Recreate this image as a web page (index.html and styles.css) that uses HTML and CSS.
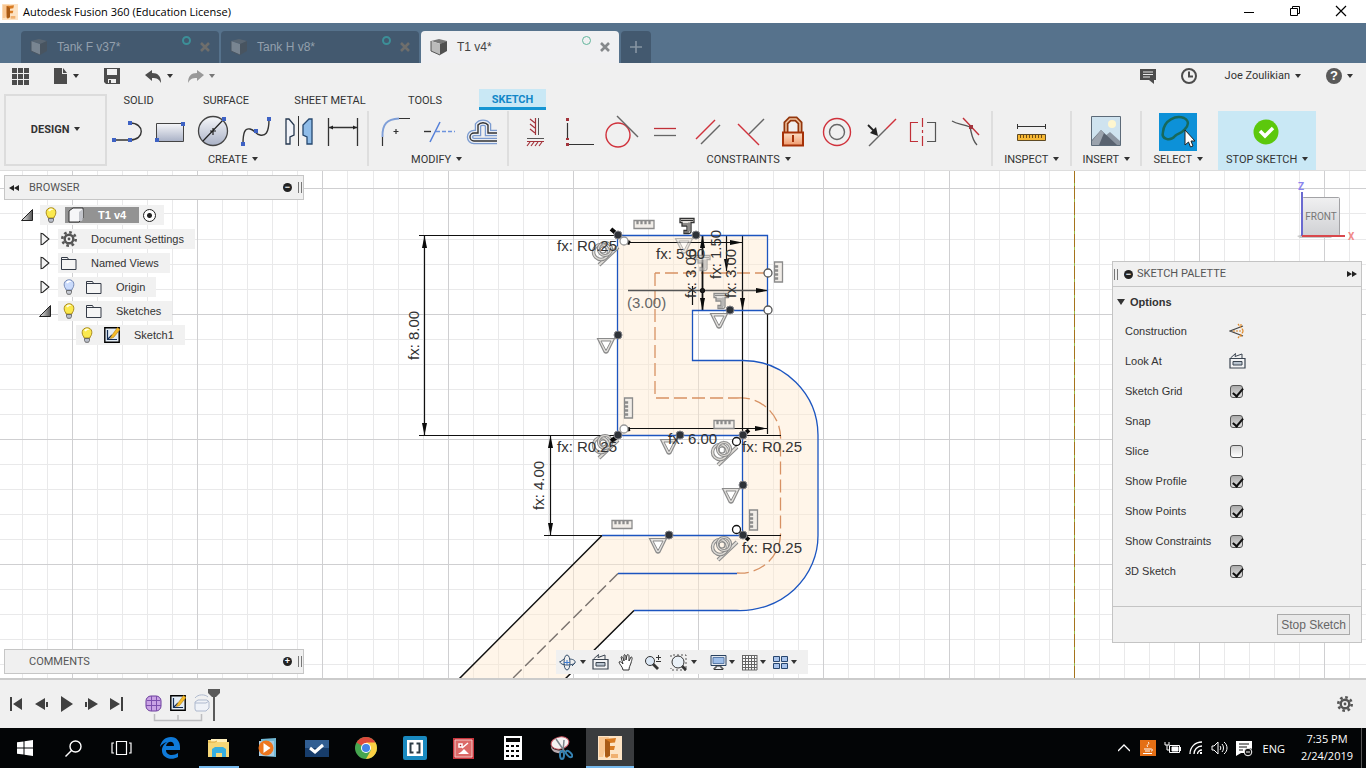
FILE: index.html
```html
<!DOCTYPE html>
<html lang="en">
<head>
<meta charset="utf-8">
<title>Autodesk Fusion 360 (Education License)</title>
<link rel="stylesheet" href="styles.css">
</head>
<body>
<svg class="defs" aria-hidden="true">
  <defs>
    <linearGradient id="steel" x1="0" y1="0" x2="0" y2="1"><stop offset="0" stop-color="#f6f7fa"/><stop offset="1" stop-color="#a9b1c6"/></linearGradient>
    <linearGradient id="cubeface" x1="0" y1="0" x2="0" y2="1"><stop offset="0" stop-color="#f0f0f1"/><stop offset="1" stop-color="#d0d1d4"/></linearGradient>
    <linearGradient id="fade" x1="0" y1="0" x2="1" y2="0"><stop offset="0" stop-color="#eee"/><stop offset="1" stop-color="#555"/></linearGradient>
    <linearGradient id="lockfill" x1="0" y1="0" x2="0" y2="1"><stop offset="0" stop-color="#fbe0c8"/><stop offset="1" stop-color="#f0996c"/></linearGradient>
    <symbol id="bulb" viewBox="0 0 16 16"><path d="M5 10C2 7 2.500 1 8 .8S14 7 11 10v1H5z" fill="#fbe94e" stroke="#a98a1c"/><path d="M6 4c1-2 3-1.500 3-1" stroke="#fffde0" stroke-width="2" fill="none"/><path d="M5.500 11.500h5v2l-1 1.800h-3l-1-1.800z" fill="#b9bec9" stroke="#555" stroke-width=".8"/></symbol>
    <symbol id="bulb-off" viewBox="0 0 16 16"><path d="M5 10C2 7 2.500 1 8 .8S14 7 11 10v1H5z" fill="#c9dafb" stroke="#7589b5"/><path d="M6 4c1-2 3-1.500 3-1" stroke="#fff" stroke-width="2" fill="none"/><path d="M5.500 11.500h5v2l-1 1.800h-3l-1-1.800z" fill="#c6cad3" stroke="#555" stroke-width=".8"/></symbol>
    <symbol id="folder" viewBox="0 0 16 16"><path d="M.5 14.500v-12h6l1 2h7.500v10zM1 4.500h7" fill="#f5f5f5" stroke="#343b47"/></symbol>
    <symbol id="gear" viewBox="0 0 16 16"><circle cx="8" cy="8" r="6.700" fill="none" stroke="#555" stroke-width="2.600" stroke-dasharray="2.630 2.630"/><circle cx="8" cy="8" r="4.300" fill="none" stroke="#555" stroke-width="2.400"/><circle cx="8" cy="8" r="1.400" fill="#555"/></symbol>
    <symbol id="sketch" viewBox="0 0 16 16"><path d="M.8.8h14.400v14.400H.8z" fill="#e4edf5" stroke="#000" stroke-width="1.400"/><path d="M3.500 3v9.500H13M4 12l4-4" fill="none" stroke="#122c55" stroke-width="1.200"/><path d="M7 9.500L13.500.5 16 2.500 9.500 10.500 6.500 11.500z" fill="#f6bd29" stroke="#b47a10" stroke-width=".6"/></symbol>
    <symbol id="closed" viewBox="0 0 12 16"><path d="M1.500 1.500v13l2-.5 7-6-7-6z" fill="#f4f4f4" stroke="#222" stroke-width="1.200"/></symbol>
    <symbol id="open" viewBox="0 0 12 12"><path d="M.5 11.500h11V.5z" fill="url(#fade)" stroke="#222"/></symbol>
    <symbol id="lookat" viewBox="0 0 17 16"><path d="M1 5.500h15V15H1z" fill="#f2f3f5" stroke="#3a4450" stroke-width="1.200"/><path d="M4 8.500h9v3.500H4z" fill="#b8c3cf" stroke="#3a4450"/><path d="M1.500 5l5-4.500-.5 3 7-2.500V5" fill="none" stroke="#3a4450"/></symbol>
    <symbol id="cube" viewBox="0 0 18 18"><path d="M1 3l8-2 8 2-6 3z" fill="#777"/><path d="M1 3l9 3v11l-9-4z" fill="#bbb"/><path d="M10 6l7-3v10l-7 4z" fill="#505050"/><path d="M1 3v10l9 4" fill="none" stroke="#555"/></symbol>
    <symbol id="comb" viewBox="0 0 22 11"><path d="M1 9.500v-8h3v3h1v-3h3v3h1v-3h3v3h1v-3h3v3h1v-3h4v8z" fill="#f1ede8" stroke="#8b8b8b" stroke-width="1.300"/></symbol>
    <symbol id="tri" viewBox="0 0 20 18"><path d="M1.500 1.500h17L12 15q-2 2-4 0z" fill="#e3e1de" stroke="#8b8b8b" stroke-width="1.200"/><path d="M5 4h10l-5 9.500z" fill="#fff" stroke="#8b8b8b"/></symbol>
    <symbol id="tee" viewBox="0 0 18 18"><path d="M2 1.500h14v4h-3V15q-1 2-3 1.500H6v-3h3V9H4V5.500H2z" fill="#e6e3df" stroke="currentColor" stroke-width="1.300"/><path d="M3 3.500h12M11 5.500v9M4 7h6M7 15h4" stroke="currentColor" fill="none"/></symbol>
    <symbol id="tan" viewBox="0 0 32 30"><path d="M9 27L28 9" stroke="#8b8b8b" stroke-width="4"/><path d="M9 27L28 9" stroke="#e0ddd8" stroke-width="1.800"/><g fill="none"><circle cx="11" cy="14" r="7.500" stroke="#8b8b8b" stroke-width="3.500"/><circle cx="11" cy="14" r="7.500" stroke="#dedbd6" stroke-width="1.500"/><circle cx="15" cy="11" r="6.500" stroke="#8b8b8b" stroke-width="3.200"/><circle cx="15" cy="11" r="6.500" stroke="#dedbd6" stroke-width="1.200"/><circle cx="13" cy="12" r="3" stroke="#8b8b8b" stroke-width="1.200"/></g></symbol>
    <symbol id="fusion" viewBox="0 0 24 24"><path d="M0 0h24v24H0z" fill="#fde3c4"/><path d="M1 1h10l-6 20H1z" fill="#f9c793"/><path d="M7 3l11-1-1 4.500-5 .5v3h5l-1 4h-4v5l-3 3-2-1z" fill="#d97b22"/><path d="M7 3l5 3v14l-3 1-2-1z" fill="#a85a16"/><path d="M13 18h7v4h-7z" fill="#f0b070"/></symbol>
    <marker id="arr" markerUnits="userSpaceOnUse" markerWidth="13" markerHeight="7" refX="12" refY="3.500" orient="auto-start-reverse"><path d="M0 1l12.500 2.500L0 6z" fill="#0b0b0b"/></marker>
  </defs>
</svg>

<div class="app">
  <header class="titlebar">
    <svg class="app-logo" width="16" height="16"><use href="#fusion"/></svg>
    <h1>Autodesk Fusion 360 (Education License)</h1>
    <div class="window-buttons">
      <button aria-label="Minimize"><svg width="12" height="12"><path d="M1 7.500h10" stroke="#000"/></svg></button>
      <button aria-label="Restore"><svg width="12" height="12" fill="none" stroke="#000"><path d="M1.500 3.500h7v7h-7zM3.500 3V1.500h7v7H9"/></svg></button>
      <button aria-label="Close"><svg width="12" height="12"><path d="M1 1l10 10M11 1L1 11" stroke="#000" stroke-width="1.200"/></svg></button>
    </div>
  </header>

  <nav class="doc-tabs" aria-label="Documents">
    <div class="doc-tab"><svg class="dim" width="18" height="18"><use href="#cube"/></svg><a href="#tank-f">Tank F v37*</a><i class="sync"></i><button aria-label="Close Tank F"><svg width="10" height="10"><path d="M1 1l8 8M9 1L1 9" stroke="#6e6e6c" stroke-width="2.600"/></svg></button></div>
    <div class="doc-tab"><svg class="dim" width="18" height="18"><use href="#cube"/></svg><a href="#tank-h">Tank H v8*</a><i class="sync"></i><button aria-label="Close Tank H"><svg width="10" height="10"><path d="M1 1l8 8M9 1L1 9" stroke="#6e6e6c" stroke-width="2.600"/></svg></button></div>
    <div class="doc-tab active"><svg width="18" height="18"><use href="#cube"/></svg><a href="#t1">T1 v4*</a><i class="sync"></i><button aria-label="Close T1"><svg width="10" height="10"><path d="M1 1l8 8M9 1L1 9" stroke="#85888b" stroke-width="2.600"/></svg></button></div>
    <button class="new-tab" aria-label="New tab"><svg width="12" height="12"><path d="M6 0v12M0 6h12" stroke="#8795a3" stroke-width="1.600"/></svg></button>
  </nav>

  <div class="quickbar">
    <button class="q-apps" aria-label="Data panel"><svg width="17" height="17" fill="#4c4c4c"><path d="M0 0h5v5H0zM6 0h5v5H6zM12 0h5v5h-5zM0 6h5v5H0zM6 6h5v5H6zM12 6h5v5h-5zM0 12h5v5H0zM6 12h5v5H6zM12 12h5v5h-5z"/></svg></button>
    <button class="q-file" aria-label="File"><svg width="14" height="16"><path d="M0 0h8v6h5v10H0zM9 0l4 5H9z" fill="#4c4c4c"/></svg><i class="caret"></i></button>
    <button class="q-save" aria-label="Save"><svg width="16" height="16"><path d="M0 0h16v16H2l-2-2z" fill="#4c4c4c"/><path d="M3 1h10v6H3zM4 11h8v4H4z" fill="#f0f0f0"/><path d="M5 12h2v3H5z" fill="#4c4c4c"/></svg></button>
    <button class="q-undo" aria-label="Undo"><svg width="17" height="13"><path d="M0 5l7-5v3c6 0 9 3 9 10-2-4-4-5-9-5v3z" fill="#4c4c4c"/></svg><i class="caret"></i></button>
    <button class="q-redo" aria-label="Redo"><svg width="17" height="13"><path d="M17 5l-7-5v3C4 3 1 6 1 13c2-4 4-5 9-5v3z" fill="#999"/></svg><i class="caret"></i></button>
    <div class="account">
      <button aria-label="Comments"><svg width="16" height="15"><path d="M0 0h16v11h-2v4l-5-4H0z" fill="#4c4c4c"/><path d="M3 3h10M3 5.500h10M3 8h7" stroke="#e8e8e8"/></svg></button>
      <button aria-label="Job status"><svg width="16" height="16" fill="none" stroke="#4c4c4c" stroke-width="2"><circle cx="8" cy="8" r="7"/><path d="M8 3.500v5h4"/></svg></button>
      <button class="user">Joe Zoulikian <i class="caret"></i></button>
      <button class="help" aria-label="Help"><span>?</span><i class="caret"></i></button>
    </div>
  </div>

  <div class="ribbon">
    <button class="workspace">DESIGN <i class="caret"></i></button>
    <div class="ribbon-main">
      <nav class="ribbon-tabs" aria-label="Toolbar tabs">
        <a class="t-solid" href="#solid">SOLID</a><a class="t-surface" href="#surface">SURFACE</a><a class="t-sheet" href="#sheet">SHEET METAL</a><a class="t-tools" href="#tools">TOOLS</a><a class="current" href="#sketch-tab">SKETCH</a>
      </nav>
      <div class="groups">
        <section class="group">
          <div class="tools">
            <button aria-label="Line"><svg viewBox="0 0 43 38"><path d="M23 10c15 0 15 17 0 17H7" fill="none" stroke="#333" stroke-width="1.400"/><path d="M21 8h4v4h-4zM5 25h4v4H5zM21 25h4v4h-4z" fill="#3e62c4"/></svg></button>
            <button aria-label="Rectangle"><svg viewBox="0 0 43 38"><path d="M6.500 10.500h27v18h-27z" fill="url(#steel)" stroke="#444"/><path d="M31 9h4v4h-4zM5 25h4v4H5z" fill="#3e62c4"/></svg></button>
            <button aria-label="Circle"><svg viewBox="0 0 43 38"><circle cx="20" cy="18" r="14.500" fill="url(#steel)" stroke="#444" stroke-width="1.300"/><path d="M10 28L31 6M20 15v7M17 18h6" stroke="#222" stroke-width="1.200"/><path d="M29 4h4v4h-4z" fill="#3e62c4"/></svg></button>
            <button aria-label="Spline"><svg viewBox="0 0 43 38"><path d="M7 31C7 19 9 15 14 16s5 5 10 6 9-1 9-16" fill="none" stroke="#333" stroke-width="1.400"/><path d="M5 29h4v4H5zM18 16h4v4h-4zM31 4h4v4h-4z" fill="#3e62c4"/></svg></button>
            <button aria-label="Mirror"><svg viewBox="0 0 43 38"><path d="M7 6h3l5 6v10l-4 2v7H7z" fill="#f1f3f8" stroke="#26384f" stroke-width="1.300"/><path d="M33 6h-3l-6 6v10l4 2v7h5z" fill="#8fbce8" stroke="#26486f" stroke-width="1.300"/><path d="M19.500 3v30" stroke="#333"/></svg></button>
            <button aria-label="Sketch Dimension"><svg viewBox="0 0 43 38"><path d="M6.500 5v28M35.500 5v28M7 14.500h28" stroke="#333" stroke-width="1.300"/><path d="M7 14.500l4-2v4zM35 14.500l-4-2v4z" fill="#222"/></svg></button>
          </div>
          <button class="group-label">CREATE <i class="caret"></i></button>
        </section>
        <section class="group">
          <div class="tools">
            <button aria-label="Fillet"><svg viewBox="0 0 43 38"><path d="M7.500 33v-9M22 5.500h13M18.500 18.500h5M21 16v5" stroke="#333" stroke-width="1.200"/><path d="M7.500 24C7 11 12 6 24 5.500" fill="none" stroke="#7f9fd8" stroke-width="2"/></svg></button>
            <button aria-label="Trim"><svg viewBox="0 0 43 38"><path d="M12 29L22 9" stroke="#5580d8" stroke-width="1.600"/><path d="M6 18.500h7" stroke="#333" stroke-width="1.400"/><path d="M18 18.500h19" stroke="#6d93dd" stroke-width="1.400" stroke-dasharray="4 2"/></svg></button>
            <button aria-label="Offset"><svg viewBox="0 0 43 38"><g fill="none"><path d="M36 20H27v-8a6 5 0 0 0-10 0v8h-4a4 4 0 0 0 0 8h23" stroke="#7b9bd0" stroke-width="6.500"/><path d="M36 20H27v-8a6 5 0 0 0-10 0v8h-4a4 4 0 0 0 0 8h23" stroke="#e9edf4" stroke-width="4"/><path d="M36 20H27v-8a6 5 0 0 0-10 0v8h-4a4 4 0 0 0 0 8h23" stroke="#333" stroke-width="1.400"/></g></svg></button>
          </div>
          <button class="group-label">MODIFY <i class="caret"></i></button>
        </section>
        <section class="group">
          <div class="tools constraints">
            <button aria-label="Horizontal/Vertical"><svg viewBox="0 0 43 38" fill="none"><path d="M20.500 5v17M12 28.500h17M20 10l-5-4M20 15l-5-4M20 20l-5-4M15 29l-3 4M19 29l-3 4M23 29l-3 4M27 29l-3 4" stroke="#a3343c" stroke-width="1.200"/><path d="M23.500 5v17M12 25.500h17" stroke="#555"/></svg></button>
            <button aria-label="Coincident"><svg viewBox="0 0 43 38"><path d="M9.500 10v15M9 31.500h27" stroke="#333" stroke-width="1.200"/><path d="M8 5h3v3H8zM8 25h3v2H8zM8 30h3v3H8z" fill="#a3343c"/></svg></button>
            <button aria-label="Tangent"><svg viewBox="0 0 43 38" fill="none"><circle cx="17" cy="22" r="12" stroke="#d0323c" stroke-width="1.400"/><path d="M16 3l21 21" stroke="#666" stroke-width="1.400"/></svg></button>
            <button aria-label="Equal"><svg viewBox="0 0 43 38"><path d="M10 15.500h22" stroke="#c03038" stroke-width="1.300"/><path d="M10 22.500h22" stroke="#666" stroke-width="1.300"/></svg></button>
            <button aria-label="Parallel"><svg viewBox="0 0 43 38"><path d="M9 26L28 7" stroke="#d0323c" stroke-width="1.400"/><path d="M14 31l19-19" stroke="#666" stroke-width="1.400"/></svg></button>
            <button aria-label="Perpendicular"><svg viewBox="0 0 43 38"><path d="M19 21L34 6" stroke="#666" stroke-width="1.400"/><path d="M8 11l21 21" stroke="#d0323c" stroke-width="1.400"/></svg></button>
            <button aria-label="Fix"><svg viewBox="0 0 43 38"><path d="M13 19v-9l4-4h6l4 4v9" fill="none" stroke="#93360c" stroke-width="5"/><path d="M13 19v-9l4-4h6l4 4v9" fill="none" stroke="#f1c5a2" stroke-width="1.500"/><path d="M10 19.500h20v13H10z" fill="url(#lockfill)" stroke="#a63208" stroke-width="2"/><path d="M20 22v7" stroke="#a63208" stroke-width="2"/></svg></button>
            <button aria-label="Concentric"><svg viewBox="0 0 43 38" fill="none"><circle cx="21" cy="19" r="13.500" stroke="#d0323c" stroke-width="1.400"/><circle cx="21" cy="19" r="7.500" stroke="#666" stroke-width="1.400"/></svg></button>
            <button aria-label="Midpoint"><svg viewBox="0 0 43 38"><path d="M10 33l17-17" stroke="#666" stroke-width="1.400"/><path d="M27 16L37 6" stroke="#d0323c" stroke-width="1.400"/><path d="M9 12l8 8" stroke="#222" stroke-width="1.800"/><path d="M19 23l-8-3 6-6z" fill="#222"/></svg></button>
            <button aria-label="Symmetry"><svg viewBox="0 0 43 38" fill="none"><path d="M16 9.500H8.500v19H16M20.500 5v9M20.500 17v3M20.500 23v10" stroke="#c03038" stroke-width="1.200"/><path d="M25 9.500h8.500v19H25" stroke="#555" stroke-width="1.200"/></svg></button>
            <button aria-label="Curvature"><svg viewBox="0 0 43 38" fill="none"><path d="M7 8c5 3 10 3 18 6 2 8 2 13 7 18" stroke="#555" stroke-width="1.300"/><path d="M18 5l16 17" stroke="#c03038" stroke-width="1.400"/><path d="M24 12h4v4h-4z" fill="#a3343c"/></svg></button>
          </div>
          <button class="group-label">CONSTRAINTS <i class="caret"></i></button>
        </section>
        <section class="group mid">
          <div class="tools"><button aria-label="Measure"><svg viewBox="0 0 43 38"><path d="M7.500 11v5M35.500 11v5M7 13.500h29" stroke="#333"/><path d="M7.500 21.500h28v6h-28z" fill="#f6b834" stroke="#5f4a24"/><path d="M10.500 22v3M13.500 22v3M16.500 22v3M19.500 22v3M22.500 22v3M25.500 22v3M28.500 22v3M31.500 22v3" stroke="#6f4b12"/></svg></button></div>
          <button class="group-label">INSPECT <i class="caret"></i></button>
        </section>
        <section class="group mid narrow">
          <div class="tools"><button aria-label="Insert image"><svg viewBox="0 0 43 38"><path d="M6.500 3.500h29v29h-29z" fill="#cfe3ef" stroke="#5c6a78"/><circle cx="27" cy="11" r="4" fill="#fff6cf"/><path d="M20 23l5-4 10 9v4H20z" fill="#8c95a1"/><path d="M7 27l9-10 16 15H7z" fill="#5a6370"/><path d="M16 17l3 3-5 12H7v-4z" fill="#9ba3ad"/></svg></button></div>
          <button class="group-label">INSERT <i class="caret"></i></button>
        </section>
        <section class="group mid last">
          <div class="tools"><button class="picked" aria-label="Select"><svg viewBox="0 0 38 38"><path d="M4 19C5 7 17 2 25 5c6 3 4 8 1 11-4 5-7 4-10 7-5 6-14 3-12-4z" fill="none" stroke="#17695c" stroke-width="2.500"/><path d="M26 17v15l3.500-3 2 5 2.500-1-2-5h4z" fill="#fff" stroke="#222"/></svg></button></div>
          <button class="group-label">SELECT <i class="caret"></i></button>
        </section>
        <section class="group stop">
          <div class="tools"><button aria-label="Stop Sketch"><svg viewBox="0 0 43 38"><circle cx="18" cy="19" r="12.500" fill="#5cc80c"/><path d="M12 18l5 5 8-8" fill="none" stroke="#fff" stroke-width="3.500"/></svg></button></div>
          <button class="group-label">STOP SKETCH <i class="caret"></i></button>
        </section>
      </div>
    </div>
  </div>

  <main class="canvas">
    <svg class="drawing" role="img" aria-label="Sketch1">
      <g transform="translate(0 -170)">
        <path id="grid-minor" stroke="#e9e9ea" fill="none" shape-rendering="crispEdges"/>
        <path id="grid-major" stroke="#cfcfd1" fill="none" shape-rendering="crispEdges"/>
        <path d="M1074.500 170V900" stroke="#9bbf4a" stroke-width="1"/>
        <path d="M1074.500 170V900" stroke="#a5741c" stroke-width="1" stroke-dasharray="13 3"/>
        <path d="M618 235H768V310H693V360.500H743A75 75 0 0 1 818 435V535A78 75 0 0 1 737 610.500H634L554 690H448L602 535.500H743V435.500H618z" fill="#ffe9ce" fill-opacity=".45"/>
        <path d="M655 273v125h82" fill="none" stroke="#d79163" stroke-width="1.300" stroke-dasharray="13 5"/>
        <path d="M768 273H655M737 398A40 40 0 0 1 780.500 440V535A40 40 0 0 1 737 573" fill="none" stroke="#d79163" stroke-width="1.300" stroke-dasharray="13 5"/>
        <path d="M618 573.500L505 686" stroke="#7b7470" stroke-width="1.500" stroke-dasharray="12 5"/>
        <g fill="none" stroke="#101010" stroke-width="1.500"><path d="M602 535.500L448 690M634 610.500L554 690"/></g>
        <g fill="none" stroke="#101010" stroke-width="1.200">
          <path d="M419 235.500H618M419 435.500H618M544 535.500h58M742.500 235V435M767.500 310V434M743 435.500h38M743 535.500h38"/>
          <path d="M424.500 236V435" marker-start="url(#arr)" marker-end="url(#arr)"/>
          <path d="M550.500 436V535" marker-start="url(#arr)" marker-end="url(#arr)"/>
          <path d="M702.500 236V310" stroke-width="1.800" marker-start="url(#arr)" marker-end="url(#arr)"/>
          <path d="M627 242.500H742" marker-end="url(#arr)"/>
          <path d="M627 428.500H767" marker-end="url(#arr)"/>
          <path d="M726.500 235V271" marker-end="url(#arr)"/>
          <path d="M742.500 290V310" marker-end="url(#arr)"/>
          <path d="M628 290.500H768" stroke="#555" stroke-width="1.500" marker-end="url(#arr)"/>
          <path d="M692.500 286V305"/>
          <circle cx="702.500" cy="290.500" r="2" fill="#222"/>
        </g>
        <path d="M618 235.500H767.500V310.500H692.500V360.500H743A75 75 0 0 1 818 435V535A78 75 0 0 1 737 610.500H634M737 573.500H618M602 535.500H742.500V435.500H617.500V235" fill="none" stroke="#1c55c0" stroke-width="1.300"/>
        <use href="#comb" x="633" y="219" width="22" height="11"/><use href="#comb" x="713" y="419" width="22" height="11"/><use href="#comb" x="611" y="519" width="22" height="11"/>
        <use href="#comb" width="22" height="11" transform="translate(623 419) rotate(-90)"/><use href="#comb" width="22" height="11" transform="translate(773 283) rotate(-90)"/><use href="#comb" width="22" height="11" transform="translate(748 531) rotate(-90)"/>
        <use href="#tri" x="596" y="337" width="20" height="18"/><use href="#tri" x="659" y="438" width="20" height="18"/><use href="#tri" x="709" y="312" width="20" height="18"/><use href="#tri" x="721" y="487" width="20" height="18"/><use href="#tri" x="648" y="537" width="20" height="18"/><use href="#tri" x="674" y="237" width="20" height="18" opacity=".6"/>
        <g color="#333"><use href="#tee" x="678" y="217" width="18" height="18"/></g><g color="#8b8b8b"><use href="#tee" x="712" y="292" width="18" height="18"/><use href="#tee" x="694" y="254" width="18" height="18" opacity=".7"/></g>
        <use href="#tan" x="590" y="238" width="32" height="30"/><use href="#tan" x="590" y="431" width="32" height="30"/><use href="#tan" x="709" y="438" width="32" height="30"/><use href="#tan" x="709" y="533" width="32" height="30"/>
        <path d="M611 229l7 6M611 441l7-5M743 435l6-5M743 535l6 5M624 241l6 2M624 430l6-1" stroke="#0b0b0b" stroke-width="4"/>
        <g fill="#2e3238" stroke="#85858a"><circle cx="618" cy="235" r="4"/><circle cx="696" cy="235" r="4"/><circle cx="618" cy="335" r="4"/><circle cx="618" cy="435" r="4"/><circle cx="680" cy="435" r="4"/><circle cx="743" cy="435" r="4"/><circle cx="743" cy="485" r="4"/><circle cx="743" cy="535" r="4"/><circle cx="669" cy="535" r="4"/><circle cx="730" cy="310" r="4"/></g>
        <g fill="#fff" stroke="#555" stroke-width="1.300"><circle cx="768" cy="273" r="4"/><circle cx="768" cy="310" r="4"/><circle cx="624" cy="241" r="4" stroke="#999"/><circle cx="624" cy="429" r="4" stroke="#999"/><circle cx="736.500" cy="441.500" r="4" stroke="#111"/><circle cx="736.500" cy="529.500" r="4" stroke="#111"/></g>
        <g class="dims">
          <text x="557" y="251">fx: R0.25</text><text x="557" y="452">fx: R0.25</text><text x="742" y="452">fx: R0.25</text><text x="742" y="553">fx: R0.25</text>
          <text x="656" y="259">fx: 5.00</text><text x="668" y="444">fx: 6.00</text><text class="driven" x="627" y="308">(3.00)</text>
          <text transform="translate(419 360) rotate(-90)">fx: 8.00</text><text transform="translate(544 510) rotate(-90)">fx: 4.00</text><text transform="translate(696 298) rotate(-90)">fx: 3.00</text><text transform="translate(721 279) rotate(-90)">fx: 1.50</text><text transform="translate(736 298) rotate(-90)">fx: 3.00</text>
        </g>
      </g>
    </svg>

    <aside class="browser">
      <header class="bar"><svg width="11" height="8"><path d="M5 1v6L0 4zM10 1v6L5 4z" fill="#222"/></svg><h2>BROWSER</h2><button class="round" aria-label="Collapse">−</button><i class="grip"></i></header>
      <ul class="tree">
        <li class="l0"><svg class="exp"><use href="#open"/></svg><div class="node"><svg><use href="#bulb"/></svg><span class="root"><svg viewBox="0 0 16 16"><path d="M1 4l4-3h10v10l-4 4H1z" fill="#f6f6f8" stroke="#333"/><path d="M11 5v9h3l1-3V2z" fill="#c3c5cb"/></svg><b>T1 v4</b></span><input type="radio" checked aria-label="Activate T1 v4"></div></li>
        <li class="l1"><svg class="exp"><use href="#closed"/></svg><div class="node"><svg><use href="#gear"/></svg><span>Document Settings</span></div></li>
        <li class="l1"><svg class="exp"><use href="#closed"/></svg><div class="node"><svg><use href="#folder"/></svg><span>Named Views</span></div></li>
        <li class="l1"><svg class="exp"><use href="#closed"/></svg><div class="node"><svg><use href="#bulb-off"/></svg><svg class="second"><use href="#folder"/></svg><span>Origin</span></div></li>
        <li class="l1"><svg class="exp"><use href="#open"/></svg><div class="node"><svg><use href="#bulb"/></svg><svg class="second"><use href="#folder"/></svg><span>Sketches</span></div></li>
        <li class="l2"><div class="node"><svg><use href="#bulb"/></svg><svg class="second"><use href="#sketch"/></svg><span>Sketch1</span></div></li>
      </ul>
    </aside>

    <svg class="viewcube" width="66" height="64" role="img" aria-label="View cube: Front">
      <path d="M7 56l6-2h32l-4 4H10z" fill="#c9c9c9"/><rect x="12.500" y="17.500" width="37" height="38" rx="1" fill="url(#cubeface)" stroke="#a2a2a5"/>
      <path d="M12 12v44" stroke="#6a6ad0" stroke-width="2"/><path d="M12 56h43" stroke="#d9484c" stroke-width="2"/>
      <text class="face" x="31" y="40" text-anchor="middle">FRONT</text><text class="axis z" x="8" y="10">Z</text><text class="axis x" x="58" y="60">X</text>
    </svg>

    <aside class="palette">
      <header class="bar"><i class="grip"></i><button class="round" aria-label="Collapse palette">−</button><h2>SKETCH PALETTE</h2><svg width="11" height="8"><path d="M1 1v6l5-3zM6 1v6l5-3z" fill="#222"/></svg></header>
      <div class="options">
        <h3><i class="caret"></i>Options</h3>
        <div class="row"><span>Construction</span><button aria-label="Construction"><svg width="17" height="16" fill="none"><path d="M14 3L1 8l13 5" stroke="#444" stroke-width="1.200"/><path d="M4 8h12M9 1l5 6M9 15l5-6M12 1v3M12 12v3" stroke="#e08a2a" stroke-width="1.200" stroke-dasharray="2 1"/></svg></button></div>
        <div class="row"><span>Look At</span><button aria-label="Look At"><svg width="17" height="16"><use href="#lookat"/></svg></button></div>
        <div class="row"><label for="o1">Sketch Grid</label><input type="checkbox" id="o1" checked></div>
        <div class="row"><label for="o2">Snap</label><input type="checkbox" id="o2" checked></div>
        <div class="row"><label for="o3">Slice</label><input type="checkbox" id="o3"></div>
        <div class="row"><label for="o4">Show Profile</label><input type="checkbox" id="o4" checked></div>
        <div class="row"><label for="o5">Show Points</label><input type="checkbox" id="o5" checked></div>
        <div class="row"><label for="o6">Show Constraints</label><input type="checkbox" id="o6" checked></div>
        <div class="row"><label for="o7">3D Sketch</label><input type="checkbox" id="o7" checked></div>
      </div>
      <footer><button class="stop-sketch">Stop Sketch</button></footer>
    </aside>

    <section class="comments bar"><h2>COMMENTS</h2><button class="round" aria-label="Expand comments">+</button><i class="grip"></i></section>

    <nav class="navbar" aria-label="Navigation">
      <button class="orbit" aria-label="Orbit"><svg width="17" height="17" fill="none" stroke="#35506e"><path d="M8 1c-4 0-4 15 0 15s4-15 0-15zM1 7c-1 5 12 5 15 2 1-3-3-4-6-4M1 8l4-3M13 12l3-3"/><path d="M8 6v5M5 8.500h6" stroke="#3c7bd0"/></svg><i class="caret"></i></button>
      <button aria-label="Look At"><svg width="17" height="16"><use href="#lookat"/></svg></button>
      <button aria-label="Pan"><svg width="17" height="17"><path d="M5 16c0-3-4-6-4-8 1-1 2 0 4 2L3 3c1-1 2 0 3 4V1c1-1 2 0 2 5l1-5c1-1 2 0 2 1v5l2-4c2 0 1 2 0 6-1 3-2 4-2 7z" fill="#fff" stroke="#333"/></svg></button>
      <button aria-label="Zoom"><svg width="17" height="17"><path d="M8 9l6 6" stroke="#333" stroke-width="2.800"/><circle cx="6" cy="7" r="4.500" fill="#dce8f5" stroke="#333"/><path d="M12 3.500h5M14.500 1v5M12 7.500h5" stroke="#333"/></svg></button>
      <button aria-label="Fit"><svg width="17" height="17"><path d="M1 3V1h15v15H1v-2" fill="none" stroke="#555" stroke-dasharray="2 2"/><path d="M11 11l5 5" stroke="#333" stroke-width="2.800"/><circle cx="8" cy="8" r="6" fill="#eaf1f7" stroke="#333"/></svg><i class="caret"></i></button>
      <button class="view first" aria-label="Display Settings"><svg width="17" height="16"><path d="M1 1.500h15v10H1z" fill="#e4e8ee" stroke="#28415f"/><path d="M3 3.500h11v6H3z" fill="#9dbde8" stroke="#5a7ba8"/><path d="M6 12v2H4v1.500h9V14h-2v-2z" fill="#eef1f5" stroke="#333"/></svg><i class="caret"></i></button>
      <button class="view" aria-label="Grid Settings"><svg width="17" height="17"><path d="M1 1h15v15H1z" fill="#fafafa"/><path d="M1 1.500h15M1 4.500h15M1 7.500h15M1 10.500h15M1 13.500h15M1 16h15M1.500 1v15M4.500 1v15M7.500 1v15M10.500 1v15M13.500 1v15M16 1v15" stroke="#666"/></svg><i class="caret"></i></button>
      <button class="view" aria-label="Viewports"><svg width="17" height="14"><path d="M1.500 1.500h6v5h-6zM9.500 1.500h6v5h-6zM1.500 8.500h6v5h-6zM9.500 8.500h6v5h-6z" fill="#a9c4ec" stroke="#27466f"/></svg><i class="caret"></i></button>
    </nav>
  </main>

  <section class="timeline" aria-label="Timeline">
    <div class="playback">
      <button aria-label="To start"><svg width="13" height="14" fill="#404040"><path d="M0 0h2v14H0zM12 1v12L3 7z"/></svg></button>
      <button aria-label="Step back"><svg width="13" height="14" fill="#404040"><path d="M10 1v12L0 7zM11 5h2v5h-2z"/></svg></button>
      <button aria-label="Play"><svg width="13" height="16" fill="#404040"><path d="M1 0v16l12-8z"/></svg></button>
      <button aria-label="Step forward"><svg width="13" height="14" fill="#404040"><path d="M3 1v12l10-6zM0 5h2v5H0z"/></svg></button>
      <button aria-label="To end"><svg width="13" height="14" fill="#404040"><path d="M11 0h2v14h-2zM0 1v12l10-6z"/></svg></button>
    </div>
    <svg class="features" width="78" height="36">
      <rect x="4" y="8" width="15" height="15" rx="5" fill="#c9a2e4" stroke="#6b3c9c"/><path d="M5 12.500h13M4 17.500h15M9.500 8v15M14.500 8v15" stroke="#7d4fae"/>
      <use href="#sketch" x="28" y="7" width="16" height="16"/>
      <path d="M53 14l3-2h9l2 2v6l-3 3H54l-1-2z" fill="#eff2f8" stroke="#aeb9ce"/><path d="M53 15h11l3-2M53 10c3-4 10-4 13-1" fill="none" stroke="#aeb9ce"/>
      <path d="M12.500 26v6.500h47V26M36 27v5" fill="none" stroke="#bdbdbf" stroke-width="1.500"/>
      <path d="M66 1h12v4l-4 4h-1v24h-2V9h-1l-4-4z" fill="#5a5a5a"/>
    </svg>
    <button class="settings" aria-label="Timeline settings"><svg width="16" height="16"><use href="#gear"/></svg></button>
  </section>

  <footer class="taskbar">
    <button aria-label="Start"><svg width="16" height="16" fill="#fff"><path d="M0 2.300L6.500 1.400v6.100H0zM7.500 1.300L16 0v7.500H7.500zM0 8.500h6.500v6.100L0 13.700zM7.500 8.500H16V16l-8.500-1.300z"/></svg></button>
    <button aria-label="Search"><svg width="17" height="17" fill="none" stroke="#fff" stroke-width="1.400"><circle cx="10.500" cy="6.500" r="5.500"/><path d="M6.500 10.500L.5 16.500"/></svg></button>
    <button aria-label="Task View"><svg width="21" height="16" fill="none" stroke="#fff" stroke-width="1.200"><path d="M5.500 1.500h10v13h-10zM3 3H1v10h2M18 3h2v10h-2"/></svg></button>
    <button class="task" aria-label="Edge"><svg width="22" height="22"><path d="M1 10C2 4 6 0 12 0c6 0 9 5 9 10v3H7c0 6 8 6 12 3v4c-7 4-17 1-16-8 .5-3 2-5 5-7-3 1-5 2-7 5zM7 9h8c0-6-7-5-8 0z" fill="#0f7ad8"/></svg></button>
    <button class="task open" aria-label="File Explorer"><svg width="22" height="20"><path d="M0 2h8l2 2h11v15H0z" fill="#f5d677"/><path d="M3 1h16v3H3z" fill="#fff0bb"/><path d="M0 4l7 0 2-1" stroke="#dba83a" fill="none"/><path d="M4 19v-8l3-2h8l3 2v8h-4v-4H8v4z" fill="#35aee0"/></svg></button>
    <button class="task" aria-label="Media Player"><svg width="21" height="20"><path d="M4 1l15-1v19l-15-1z" fill="#72b9d5"/><path d="M2 3h15v15H2z" fill="#a7cce2"/><circle cx="9" cy="10" r="7.500" fill="#ee771f"/><path d="M6.500 5v10l7-5z" fill="#fff"/></svg></button>
    <button class="task" aria-label="Tasks"><svg width="24" height="17"><path d="M0 0h24v17H0z" fill="#173d6b"/><path d="M0 0h24v8H0z" fill="#315e92"/><path d="M5 8l5 4 8-7" fill="none" stroke="#fff" stroke-width="3"/></svg></button>
    <button class="task" aria-label="Chrome"><svg width="22" height="22"><circle cx="11" cy="11" r="11" fill="#46a650"/><path d="M11 11L1.500 5.500A11 11 0 0 1 20.500 5.500z" fill="#dd4a3c"/><path d="M11 5.500h9.500A11 11 0 0 1 11 22l5-9z" fill="#fbd043"/><circle cx="11" cy="11" r="5" fill="#fff"/><circle cx="11" cy="11" r="4" fill="#4285e8"/></svg></button>
    <button class="task" aria-label="Brackets"><svg width="24" height="24"><rect width="24" height="24" rx="2" fill="#1989bf"/><path d="M4 4h16v16H4z" fill="#fff"/><path d="M10.500 7.500H7.500v9h3M13.500 7.500h3v9h-3" fill="none" stroke="#2d3c46" stroke-width="2"/></svg></button>
    <button class="task" aria-label="Robot editor"><svg width="21" height="21"><path d="M0 0h21v21H0z" fill="#c8363d"/><path d="M2 2h17v17H2z" fill="#dc6a68" stroke="#f3c8c6"/><path d="M5 16h11l-5-5-3 3z" fill="#fff"/><path d="M6 6h3v3H6zM9 10l6-5" stroke="#fff" stroke-width="1.500" fill="#b02028"/></svg></button>
    <button class="task" aria-label="Calculator"><svg width="18" height="24"><path d="M0 0h18v24H0z" fill="#fff"/><path d="M2 2h14v4H2zM2 9h3v2H2zM7 9h3v2H7zM12 9h3v2h-3zM2 14h3v2H2zM7 14h3v2H7zM12 14h3v2h-3zM2 19h3v2H2zM7 19h3v2H7zM12 19h3v2h-3z" fill="#050505"/></svg></button>
    <button class="task" aria-label="Snipping Tool"><svg width="23" height="24"><ellipse cx="10" cy="7" rx="9" ry="6" fill="#f5f2f2" stroke="#c95663" transform="rotate(-12 10 7)"/><path d="M1 9c0 5 9 7 13 4v3c-6 3-14 0-13-7z" fill="#b9a9ad"/><path d="M6 3l9 13M14 4l-1 12" stroke="#7d858c" stroke-width="1.500"/><ellipse cx="12" cy="19" rx="2" ry="4" fill="none" stroke="#3583b4" stroke-width="2"/><ellipse cx="19" cy="18" rx="2" ry="4" fill="none" stroke="#3583b4" stroke-width="2" transform="rotate(-45 19 18)"/></svg></button>
    <button class="task open running" aria-label="Fusion 360"><svg width="24" height="24"><use href="#fusion"/></svg></button>
    <div class="tray">
      <button aria-label="Hidden icons"><svg width="12" height="8"><path d="M0 7l6-6 6 6" fill="none" stroke="#fff" stroke-width="1.300"/></svg></button>
      <button class="t-java" aria-label="Java"><svg width="16" height="16"><path d="M0 0h16v16H0z" fill="#e46f15"/><path d="M8 2c3 2-3 3 0 5M4 9h7M5 11h5M3 13.500h9M11 9c2 0 2 2 0 2" fill="none" stroke="#fff"/></svg></button>
      <button aria-label="Battery"><svg width="17" height="14" fill="none" stroke="#fff"><path d="M5.500 4.500h10v7h-10zM16.500 6v4M1 1v3h4V1M3 4v5h2"/><path d="M8 6h6v4H8z" fill="#fff"/></svg></button>
      <button aria-label="Wi-Fi"><svg width="14" height="14" fill="none" stroke="#fff" stroke-width="1.300"><path d="M1 13C1 6 6 1 13 1M5 13c0-4 3-8 8-8M8.500 13c0-2 2-4 4.500-4"/><path d="M11 11h2v2h-2z" fill="#fff" stroke="none"/></svg></button>
      <button aria-label="Volume"><svg width="17" height="14" fill="none" stroke="#fff"><path d="M1 5h2l4-4v12L3 9H1zM9 5c1 1 1 3 0 4M11 3c2 2 2 6 0 8M13 1c4 3 4 9 0 12"/></svg></button>
      <button aria-label="Notifications"><svg width="17" height="17"><path d="M0 1h16v8a5 5 0 0 0-8 4H5l-5 3z" fill="#fff"/><path d="M3 4h10M3 7h8M3 10h4" stroke="#111"/><circle cx="12" cy="12" r="3.800" fill="#111" stroke="#fff"/><path d="M10 12h4" stroke="#fff"/></svg></button>
      <span class="lang">ENG</span>
      <div class="clock"><time>7:35 PM</time><time>2/24/2019</time></div>
    </div>
  </footer>
</div>
<script src="grid.js"></script>
</body>
</html>
```
FILE: grid.js
```js
// Builds the sketch grid: a heavier line on every fifth division.
const DIVISION = 25.05;
const ORIGIN_X = 72.4;
const ORIGIN_Y = 188.9;

function drawGrid() {
  let minor = "";
  let major = "";
  const right = Math.max(window.innerWidth, 1366);
  const bottom = Math.max(window.innerHeight, 768) + 170;
  for (let i = -2; ORIGIN_X + i * DIVISION < right; i++) {
    const line = `M${Math.floor(ORIGIN_X + i * DIVISION) + 0.5} 170V${bottom}`;
    if (i % 5 === 0) major += line; else minor += line;
  }
  for (let i = 0; ORIGIN_Y + i * DIVISION < bottom; i++) {
    const line = `M0 ${Math.floor(ORIGIN_Y + i * DIVISION) + 0.5}H${right}`;
    if (i % 5 === 0) major += line; else minor += line;
  }
  document.getElementById("grid-minor").setAttribute("d", minor);
  document.getElementById("grid-major").setAttribute("d", major);
}

drawGrid();
window.addEventListener("resize", drawGrid);
```
FILE: styles.css
```css
* { box-sizing: border-box; }
html, body { height: 100%; }
body { margin: 0; overflow: hidden; font: 11px/14px "Liberation Sans", Arial, sans-serif; color: #333; }
button { border: 0; padding: 0; margin: 0; background: none; font: inherit; color: inherit; }
svg { display: block; flex: none; }
h1, h2, h3, ul { margin: 0; padding: 0; font-size: inherit; font-weight: 400; }
a { color: inherit; text-decoration: none; }
.defs { position: absolute; width: 0; height: 0; }
.app { display: flex; flex-direction: column; height: 100vh; min-height: 700px; background: #f0f0f0; }
.caret { display: inline-block; border: 3px solid transparent; border-top: 4px solid #333; border-bottom: 0; flex: none; }

.titlebar { display: flex; align-items: center; height: 23px; padding: 0 19px 0 2px; background: #fff; color: #000; }
.titlebar h1 { margin-left: 5px; font: 11px/16px "Open Sans", sans-serif; }
.window-buttons { display: flex; gap: 34px; margin-left: auto; padding-bottom: 2px; }

.doc-tabs { display: flex; align-items: flex-end; gap: 2px; height: 40px; padding-left: 21px; background: #56728c; }
.doc-tab { display: flex; align-items: center; width: 198px; height: 32px; padding: 0 9px; border-radius: 4px 4px 0 0; background: #43596f; color: #93a0ad; font-size: 12px; }
.doc-tab svg.dim { opacity: .45; }
.doc-tab a { margin-left: 9px; }
.doc-tab button { margin-left: 9px; }
.sync { width: 9px; height: 9px; margin: 0 0 14px auto; border: 2px solid #3c8f98; border-radius: 50%; }
.doc-tab.active { background: #f0f0f2; color: #444; }
.active .sync { border: 1px solid #62b59c; }
.new-tab { display: flex; align-items: center; justify-content: center; width: 30px; height: 32px; border-radius: 4px 4px 0 0; background: #43596f; }

.quickbar { display: flex; align-items: center; height: 26px; padding: 0 13px 0 12px; }
.quickbar button { display: flex; align-items: center; gap: 5px; }
.q-file { margin-left: 25px; }
.q-save { margin-left: 25px; }
.q-undo { margin-left: 25px; }
.q-redo { margin-left: 14px; }
.q-redo .caret { border-top-color: #777; }
.account { display: flex; align-items: center; margin-left: auto; gap: 25px; }
.account .user { margin-left: 3px; font-family: Roboto, sans-serif; }
.help span { width: 16px; height: 16px; border-radius: 50%; background: #5a5a5a; color: #fff; font: bold 13px/16px "Liberation Sans", sans-serif; text-align: center; }

.ribbon { display: flex; height: 81px; padding-left: 4px; font-family: Roboto, sans-serif; }
.workspace { width: 103px; height: 72px; margin-top: 5px; border: 2px solid #dcdcdc; font-weight: 700; }
.workspace .caret, .group-label .caret { margin: 0 0 2px 2px; }
.ribbon-main { flex: 1; display: flex; flex-direction: column; }
.ribbon-tabs { display: flex; height: 22px; }
.ribbon-tabs a { display: flex; align-items: center; justify-content: center; width: 88px; padding-top: 1px; }
.ribbon-tabs .t-solid { width: 63px; }
.ribbon-tabs .t-surface { width: 112px; }
.ribbon-tabs .t-sheet { width: 96px; }
.ribbon-tabs .t-tools { width: 94px; }
.ribbon-tabs .current { width: 67px; height: 21px; margin-left: 7px; border-bottom: 3px solid #1595d3; background: #c9e8f5; color: #1287c8; font-weight: 700; padding-top: 3px; }
.groups { display: flex; flex: 1; }
.group { display: flex; flex-direction: column; padding: 2px 3px 0 6px; border-right: 2px solid #dedede; height: 55px; }
.group:first-child { padding: 2px 2px 0 0; }
.tools { display: flex; justify-content: center; }
.tools button { width: 43px; height: 38px; }
.tools button.picked { width: 38px; background: #0d91d8; }
.group-label { flex: none; height: 14px; text-align: center; margin: 2px 6px 0 0; }
.group.mid { width: 79px; padding: 2px 0 0; }
.group.narrow { width: 70px; }
.group.last { width: 76px; border: 0; padding-right: 4px; }
.mid .group-label { margin-right: 0; }
.group.stop { width: 98px; height: 59px; border: 0; padding: 2px 0 0; background: #c9e8f5; }
.stop .group-label { margin-right: 0; }
.stop .tools { padding-left: 4px; }

.canvas { position: relative; flex: 1; min-height: 0; overflow: hidden; background: #fff; border-top: 1px solid #ddd; border-bottom: 2px solid #cbcbcb; }
.drawing { position: absolute; top: -1px; left: 0; width: 100%; height: calc(100% + 1px); }
.dims text { font: 15px "Liberation Sans", Arial, sans-serif; fill: #333; }
.dims .driven { fill: #666; }
.bar { display: flex; align-items: center; height: 25px; background: #f0f0f0; border: 1px solid #c6c6c6; color: #555; }
.bar h2 { font: 11px/14px Roboto, sans-serif; }
.round { width: 9px; height: 9px; border-radius: 50%; background: #222; color: #fff; font: bold 9px/9px "Liberation Sans", sans-serif; text-align: center; }
.grip { width: 4px; height: 11px; border: solid #777; border-width: 0 1px; }
.browser { position: absolute; top: 4px; left: 4px; width: 300px; }
.browser .bar { padding: 0 1px 0 4px; }
.browser h2 { margin-left: 9px; }
.browser .round, .comments .round { margin: 0 6px 0 auto; }
.tree { list-style: none; padding-top: 3px; }
.tree li { display: flex; align-items: center; height: 24px; }
.l0 { padding-left: 16px; }
.l1 { padding-left: 34px; }
.l2 { padding-left: 72px; }
.exp { width: 14px; height: 14px; margin-right: 6px; }
.l0 .exp, .exp:has([href="#open"]) { width: 14px; height: 12px; }
.node { display: flex; align-items: center; height: 20px; padding: 0 11px 0 3px; background: #f1f1f1; }
.node svg { width: 16px; height: 16px; }
.node > span { margin-left: 14px; }
.node .second { margin-left: 9px; }
.node > .root { display: flex; align-items: center; gap: 14px; width: 74px; height: 16px; margin-left: 6px; padding-left: 3px; background: #939393; color: #fff; }
.l0 .node { padding-right: 8px; }
.node input { appearance: none; width: 13px; height: 13px; margin: 0 0 0 4px; border: 1px solid #222; border-radius: 50%; background: radial-gradient(circle, #222 2px, #fff 3px); }
.viewcube { position: absolute; top: 9px; right: 10px; }
.face { font: 10px Roboto, sans-serif; fill: #777; }
.axis { font: bold 10px Roboto, sans-serif; }
.axis.z { fill: #8b84ee; }
.axis.x { fill: #f08a8a; }

.palette { position: absolute; top: 90px; right: 4px; width: 250px; background: #f0f0f0; border: 1px solid #c4c4c4; }
.palette .bar { border-width: 0 0 1px; padding: 0 4px 0 1px; }
.palette .round { margin: 0 4px 0 6px; }
.palette .bar svg { margin-left: auto; }
.options { padding: 0 12px 20px; }
.options h3 { display: flex; align-items: center; gap: 5px; height: 29px; margin-left: -8px; font: bold 11px/14px "Liberation Sans", sans-serif; }
.options .caret { border-width: 6px 4px 0; }
.row { display: grid; grid-template-columns: 104px 18px; align-items: center; height: 30px; }
.row input { appearance: none; position: relative; width: 13px; height: 13px; margin: 0 0 0 1px; border: 1px solid #555; border-radius: 3px; background: linear-gradient(#d5d5d5, #fff); }
.row input:checked { background: linear-gradient(#aaa, #ddd); }
.row input:checked::after { content: ""; position: absolute; left: 4px; top: 0; width: 4px; height: 9px; border: solid #111; border-width: 0 2px 2px 0; transform: rotate(40deg); }
.palette footer { display: flex; justify-content: flex-end; padding: 7px 11px; border-top: 1px solid #c4c4c4; }
.stop-sketch { width: 73px; height: 21px; border: 1px solid #aaa; background: #e9e9e9; color: #666; font-size: 12px; }
.comments { position: absolute; left: 4px; bottom: 4px; width: 300px; padding: 0 1px 0 24px; }
.navbar { position: absolute; left: 50%; bottom: 4px; display: flex; align-items: center; gap: 9px; width: 252px; height: 24px; margin-left: -127px; padding-left: 3px; background: #f0f0f0; }
.navbar button { display: flex; align-items: center; gap: 4px; }
.navbar .orbit { margin-right: -3px; }
.navbar .view { gap: 2px; margin-right: -3px; }
.navbar .first { margin-left: 4px; }

.timeline { display: flex; align-items: center; height: 48px; padding: 0 13px 0 10px; }
.playback { display: flex; align-items: center; gap: 12px; }
.features { align-self: flex-end; margin: 0 0 4px 19px; }
.settings { margin-left: auto; }

.taskbar { display: flex; height: 40px; padding-left: 1px; background: #030506; color: #fff; }
.taskbar > button { display: flex; align-items: center; justify-content: center; width: 48px; }
.taskbar > .task { width: 49px; }
.taskbar > .open { background: linear-gradient(#76b9ed, #76b9ed) bottom / 40px 2px no-repeat; }
.taskbar > .running { width: 48px; background: #3a3c3e; border-bottom: 2px solid #76b9ed; padding-top: 2px; }
.tray { display: flex; align-items: center; gap: 8px; margin-left: auto; font: 11px/17px "Open Sans", sans-serif; }
.t-java { margin-left: 2px; }
.lang { margin-left: 2px; }
.clock { display: flex; flex-direction: column; align-items: center; width: 69px; height: 40px; padding-top: 2px; margin-right: 4px; border-right: 1px solid #555; }
```
